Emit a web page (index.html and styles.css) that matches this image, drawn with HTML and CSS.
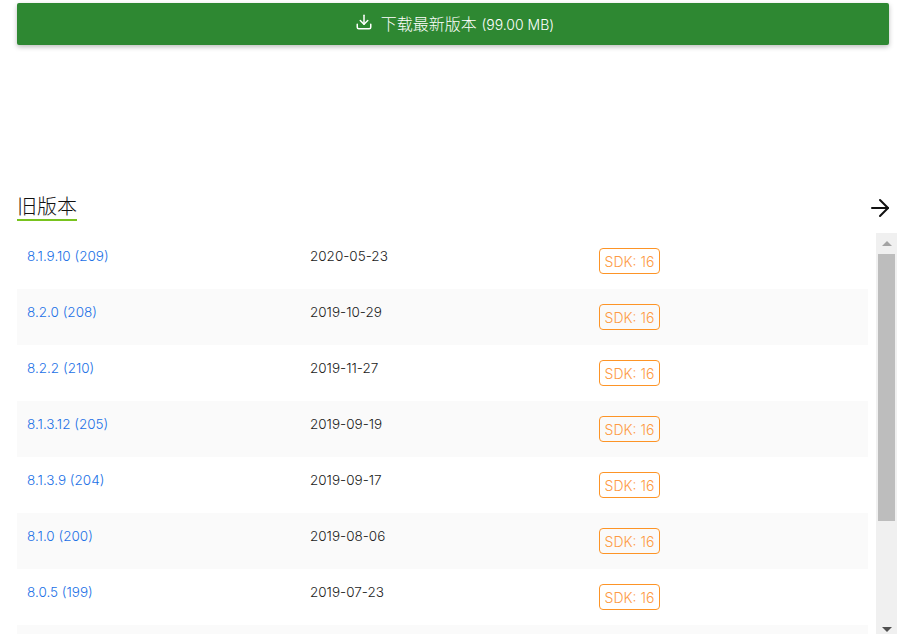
FILE: index.html
```html
<!DOCTYPE html>
<html lang="zh-CN">
<head>
  <meta charset="UTF-8">
  <title>旧版本</title>
  <link rel="stylesheet" href="styles.css">
</head>
<body>
  <div class="page">
    <a class="download-btn" href="#">
      <svg class="download-icon" viewBox="0 0 24 24" width="18" height="18" fill="none" stroke="currentColor" stroke-width="2" stroke-linecap="round" stroke-linejoin="round">
        <path d="M3 15v4a2 2 0 0 0 2 2h14a2 2 0 0 0 2-2v-4"/>
        <path d="M7 10l5 5 5-5"/>
        <path d="M12 15V3"/>
      </svg>
      <span class="download-label">下载最新版本 <span class="download-size">(99.00 MB)</span></span>
    </a>

    <div class="section-head">
      <h2 class="section-title">旧版本</h2>
      <svg class="arrow-icon" viewBox="0 0 24 24" width="24" height="24" fill="none" stroke="#111" stroke-width="2" stroke-linecap="round" stroke-linejoin="round">
        <path d="M4 12h16"/>
        <path d="M12 4l8 8-8 8"/>
      </svg>
    </div>

    <div class="list-wrap">
      <div class="version-list">
        <div class="version-row">
          <a class="version-name" href="#">8.1.9.10 (209)</a>
          <span class="version-date">2020-05-23</span>
          <span class="version-sdk"><span class="sdk-tag">SDK: 16</span></span>
        </div>
        <div class="version-row">
          <a class="version-name" href="#">8.2.0 (208)</a>
          <span class="version-date">2019-10-29</span>
          <span class="version-sdk"><span class="sdk-tag">SDK: 16</span></span>
        </div>
        <div class="version-row">
          <a class="version-name" href="#">8.2.2 (210)</a>
          <span class="version-date">2019-11-27</span>
          <span class="version-sdk"><span class="sdk-tag">SDK: 16</span></span>
        </div>
        <div class="version-row">
          <a class="version-name" href="#">8.1.3.12 (205)</a>
          <span class="version-date">2019-09-19</span>
          <span class="version-sdk"><span class="sdk-tag">SDK: 16</span></span>
        </div>
        <div class="version-row">
          <a class="version-name" href="#">8.1.3.9 (204)</a>
          <span class="version-date">2019-09-17</span>
          <span class="version-sdk"><span class="sdk-tag">SDK: 16</span></span>
        </div>
        <div class="version-row">
          <a class="version-name" href="#">8.1.0 (200)</a>
          <span class="version-date">2019-08-06</span>
          <span class="version-sdk"><span class="sdk-tag">SDK: 16</span></span>
        </div>
        <div class="version-row">
          <a class="version-name" href="#">8.0.5 (199)</a>
          <span class="version-date">2019-07-23</span>
          <span class="version-sdk"><span class="sdk-tag">SDK: 16</span></span>
        </div>
        <div class="version-row"></div>
      </div>

      <div class="scrollbar">
        <span class="scroll-btn"><span class="tri tri-up"></span></span>
        <div class="scroll-track"><div class="scroll-thumb"></div></div>
        <span class="scroll-btn"><span class="tri tri-down"></span></span>
      </div>
    </div>
  </div>
</body>
</html>
```

FILE: styles.css
```css
html, body {
  margin: 0;
  padding: 0;
}

body {
  background: #fff;
  color: #1a1a1a;
  font-family: Inter, "Noto Sans CJK SC", sans-serif;
  font-weight: 300;
  font-size: 13.5px;
  height: 634px;
  overflow: hidden;
}

.page {
  padding: 3px 15px 0 17px;
}

/* download button */
.download-btn {
  display: flex;
  align-items: center;
  justify-content: center;
  gap: 8px;
  box-sizing: border-box;
  height: 42px;
  width: 872px;
  padding-left: 3px;
  background: #2e8832;
  color: #fff;
  border-radius: 2px;
  box-shadow: 0 2px 5px rgba(0, 0, 0, 0.26);
  text-decoration: none;
  font-size: 16px;
}

.download-icon {
  margin-top: -5px;
}

.download-label {
  margin-bottom: 2px;
}

.download-size {
  font-size: 14px;
}

/* section heading */
.section-head {
  display: flex;
  justify-content: space-between;
  align-items: flex-end;
  width: 872px;
  margin-top: 148px;
  height: 29px;
}

.section-title {
  margin: 0 0 1px;
  font-size: 20px;
  font-weight: 300;
  line-height: 25px;
  color: #111;
  border-bottom: 2px solid #78c31e;
  height: 24px;
}

.arrow-icon {
  margin-right: -3px;
  margin-bottom: 2px;
}

/* version list */
.list-wrap {
  display: flex;
  margin-top: 11px;
  height: 407px;
  overflow: hidden;
}

.version-list {
  width: 851px;
  margin-right: 8px;
}

.version-row {
  display: grid;
  grid-template-columns: 283px 289px 1fr;
  height: 56px;
  padding-left: 10px;
  box-sizing: border-box;
}

.version-row:nth-child(even) {
  background: #fafafa;
}

.version-name {
  color: #1a70e6;
  text-decoration: none;
  line-height: 47px;
}

.version-date {
  line-height: 47px;
}

.version-sdk {
  padding-top: 15px;
}

.sdk-tag {
  display: inline-block;
  box-sizing: border-box;
  width: 61px;
  height: 26px;
  line-height: 26px;
  text-align: center;
  font-size: 14px;
  color: #fd9a45;
  border: 1px solid #fd9426;
  border-radius: 4px;
}

/* scrollbar */
.scrollbar {
  width: 21px;
  background: #f0f0f0;
  display: flex;
  flex-direction: column;
}

.scroll-btn {
  height: 21px;
  display: flex;
  align-items: center;
  justify-content: center;
  flex: none;
}

.scroll-track {
  flex: 1;
  padding: 0 2px;
}

.scroll-thumb {
  height: 267px;
  background: #bdbdbd;
}

.tri {
  width: 0;
  height: 0;
  border-left: 5px solid transparent;
  border-right: 5px solid transparent;
}

.tri-up {
  border-bottom: 5px solid #a3a3a3;
}

.tri-down {
  border-top: 5px solid #505050;
}
```
